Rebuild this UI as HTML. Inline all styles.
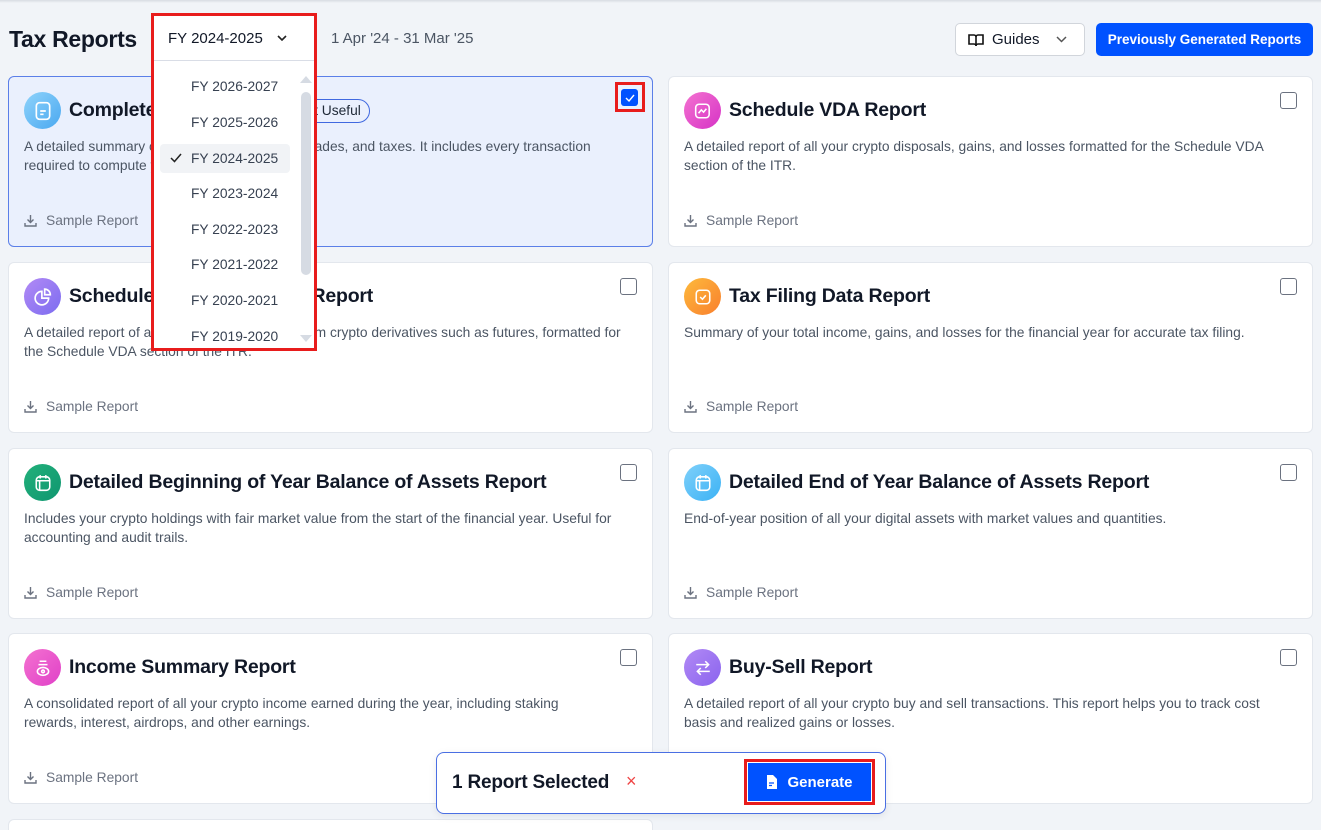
<!DOCTYPE html>
<html><head><meta charset="utf-8"><style>
*{box-sizing:border-box;margin:0;padding:0}
html,body{width:1321px;height:830px;overflow:hidden}
body{background:#f1f4f8;font-family:"Liberation Sans",sans-serif;color:#111827;position:relative}
.topshadow{position:absolute;left:0;top:0;width:1321px;height:3px;background:linear-gradient(#d8dce2,#f1f4f8)}
h1{position:absolute;left:9px;top:26px;font-size:23px;font-weight:600;color:#111827;letter-spacing:-0.3px}
.range{position:absolute;left:331px;top:30px;font-size:15px;color:#4b5563}
.guides{position:absolute;left:955px;top:23px;width:130px;height:33px;background:#fff;border:1px solid #d1d5db;border-radius:5px;font-size:15px;display:flex;align-items:center;padding-left:12px;gap:8px}
.prev{position:absolute;left:1096px;top:23px;width:217px;height:33px;background:#0052ff;border-radius:5px;color:#fff;font-size:13.5px;font-weight:600;display:flex;align-items:center;justify-content:center}
.card{position:absolute;width:645px;height:171px;background:#fff;border:1px solid #e3e7ed;border-radius:6px;overflow:hidden}
.card.sel{background:#eaf0fd;border-color:#5b7fe8;overflow:visible}
.ic{position:absolute;left:15px;top:15px;width:37px;height:37px;border-radius:50%;display:flex;align-items:center;justify-content:center}
.tt{position:absolute;left:60px;top:22px;font-size:19.5px;font-weight:600;letter-spacing:-0.2px}
.ds{position:absolute;left:15px;top:60px;width:600px;font-size:13.8px;line-height:19px;color:#4b5563}
.sr{position:absolute;left:15px;top:136px;font-size:13.8px;color:#6b7280;display:flex;align-items:center;gap:9px}
.cb{position:absolute;right:15px;top:15px;width:17px;height:17px;border:1.5px solid #6b7280;border-radius:3px;background:#fff}
.dd{position:absolute;left:151px;top:13px;width:166px;height:338px;border:3px solid #e81c1c;background:#fff}
.ddh{height:45px;border-bottom:1px solid #d9dde6;display:flex;align-items:center;padding-left:14px;font-size:15px;color:#111827;gap:14px}
.it{position:absolute;left:37px;font-size:13.8px;color:#374151}
</style></head><body>
<div class="topshadow"></div>
<h1>Tax Reports</h1>
<div class="range">1 Apr '24 - 31 Mar '25</div>
<div class="guides"><svg width="16" height="14" viewBox="0 0 16 14" fill="none" stroke="#111" stroke-width="1.6"><path d="M1 2h5a2 2 0 0 1 2 2v9a2 2 0 0 0-2-2H1zM15 2h-5a2 2 0 0 0-2 2v9a2 2 0 0 1 2-2h5z"/></svg>Guides<svg style="margin-left:8px" width="11" height="7" viewBox="0 0 11 7" fill="none" stroke="#555" stroke-width="1.5"><path d="M1 1l4.5 4.5L10 1"/></svg></div>
<div class="prev">Previously Generated Reports</div>

<div class="card sel" style="left:8px;top:76px">
<div class="ic" style="background:linear-gradient(135deg,#8fd3fb,#4aa8f0)"><svg width="18" height="20" viewBox="0 0 16 18" fill="none" stroke="#fff" stroke-width="1.5"><rect x="2" y="1.5" width="12" height="15" rx="3"/><path d="M5.5 9h5M5.5 12h3"/></svg></div>
<div class="tt">Complete Tax Report</div>
<div style="position:absolute;left:270px;top:22px;height:24px;padding:0 8px;border:1px solid #4069e0;border-radius:12px;font-size:13.8px;line-height:22px;color:#1f2937">Most Useful</div>
<div class="ds">A detailed summary of all your crypto income, trades, and taxes. It includes every transaction required to compute your taxes.</div>
<div class="sr"><svg width="13" height="13" viewBox="0 0 13 13" fill="none" stroke="#6b7280" stroke-width="1.4"><path d="M6.5 1v7M3.5 5.5l3 3 3-3M1 9v3h11V9"/></svg>Sample Report</div>
<div style="position:absolute;right:7px;top:5px;width:30px;height:30px;border:3px solid #e81c1c"></div>
<div style="position:absolute;right:14px;top:12px;width:17px;height:17px;background:#0052ff;border-radius:3px;display:flex;align-items:center;justify-content:center"><svg width="10" height="8" viewBox="0 0 10 8" fill="none" stroke="#fff" stroke-width="1.4"><path d="M1 4l3 3 5-6"/></svg></div>
</div>

<div class="card" style="left:668px;top:76px">
<div class="ic" style="background:linear-gradient(135deg,#f472d0,#d633c6)"><svg width="18" height="18" viewBox="0 0 16 16" fill="none" stroke="#fff" stroke-width="1.4"><rect x="1.5" y="2" width="12" height="12" rx="3"/><path d="M4 10l2.5-3 2 2L11 6"/></svg></div>
<div class="tt">Schedule VDA Report</div>
<div class="ds">A detailed report of all your crypto disposals, gains, and losses formatted for the Schedule VDA section of the ITR.</div>
<div class="sr"><svg width="13" height="13" viewBox="0 0 13 13" fill="none" stroke="#6b7280" stroke-width="1.4"><path d="M6.5 1v7M3.5 5.5l3 3 3-3M1 9v3h11V9"/></svg>Sample Report</div>
<div class="cb"></div></div>

<div class="card" style="left:8px;top:262px">
<div class="ic" style="background:linear-gradient(135deg,#b28af5,#7c6cf0)"><svg width="18" height="18" viewBox="0 0 16 16" fill="none" stroke="#fff" stroke-width="1.5"><path d="M7 3a6 6 0 1 0 6 6H7z"/><path d="M9.5 1a5 5 0 0 1 5 5h-5z"/></svg></div>
<div class="tt">Schedule VDA Derivatives Report</div>
<div class="ds">A detailed report of all your gains and losses from crypto derivatives such as futures, formatted for the Schedule VDA section of the ITR.</div>
<div class="sr"><svg width="13" height="13" viewBox="0 0 13 13" fill="none" stroke="#6b7280" stroke-width="1.4"><path d="M6.5 1v7M3.5 5.5l3 3 3-3M1 9v3h11V9"/></svg>Sample Report</div>
<div class="cb"></div></div>

<div class="card" style="left:668px;top:262px">
<div class="ic" style="background:linear-gradient(135deg,#fdba3c,#f97f2e)"><svg width="18" height="18" viewBox="0 0 16 16" fill="none" stroke="#fff" stroke-width="1.4"><rect x="2" y="2" width="12" height="12" rx="3"/><path d="M5.5 8l2 2 3-3.5"/></svg></div>
<div class="tt">Tax Filing Data Report</div>
<div class="ds">Summary of your total income, gains, and losses for the financial year for accurate tax filing.</div>
<div class="sr"><svg width="13" height="13" viewBox="0 0 13 13" fill="none" stroke="#6b7280" stroke-width="1.4"><path d="M6.5 1v7M3.5 5.5l3 3 3-3M1 9v3h11V9"/></svg>Sample Report</div>
<div class="cb"></div></div>

<div class="card" style="left:8px;top:448px">
<div class="ic" style="background:linear-gradient(135deg,#22b07a,#0f9670)"><svg width="18" height="18" viewBox="0 0 16 16" fill="none" stroke="#fff" stroke-width="1.4"><rect x="2" y="2.5" width="12" height="12" rx="3"/><path d="M2 6h12M5.5 1v3M10.5 1v3M5 6v8"/></svg></div>
<div class="tt">Detailed Beginning of Year Balance of Assets Report</div>
<div class="ds">Includes your crypto holdings with fair market value from the start of the financial year. Useful for accounting and audit trails.</div>
<div class="sr"><svg width="13" height="13" viewBox="0 0 13 13" fill="none" stroke="#6b7280" stroke-width="1.4"><path d="M6.5 1v7M3.5 5.5l3 3 3-3M1 9v3h11V9"/></svg>Sample Report</div>
<div class="cb"></div></div>

<div class="card" style="left:668px;top:448px">
<div class="ic" style="background:linear-gradient(135deg,#7fd0fa,#3bb2f5)"><svg width="18" height="18" viewBox="0 0 16 16" fill="none" stroke="#fff" stroke-width="1.4"><rect x="2" y="2.5" width="12" height="12" rx="3"/><path d="M2 6h12M5.5 1v3M10.5 1v3M5 6v8"/></svg></div>
<div class="tt">Detailed End of Year Balance of Assets Report</div>
<div class="ds">End-of-year position of all your digital assets with market values and quantities.</div>
<div class="sr"><svg width="13" height="13" viewBox="0 0 13 13" fill="none" stroke="#6b7280" stroke-width="1.4"><path d="M6.5 1v7M3.5 5.5l3 3 3-3M1 9v3h11V9"/></svg>Sample Report</div>
<div class="cb"></div></div>

<div class="card" style="left:8px;top:633px">
<div class="ic" style="background:linear-gradient(135deg,#f472d0,#e040c8)"><svg width="18" height="18" viewBox="0 0 16 16" fill="none" stroke="#fff" stroke-width="1.4"><path d="M5 2h6M4 5h8"/><ellipse cx="8" cy="11" rx="5" ry="3.5"/><circle cx="8" cy="11" r="1.2"/></svg></div>
<div class="tt">Income Summary Report</div>
<div class="ds" style="width:580px">A consolidated report of all your crypto income earned during the year, including staking rewards, interest, airdrops, and other earnings.</div>
<div class="sr"><svg width="13" height="13" viewBox="0 0 13 13" fill="none" stroke="#6b7280" stroke-width="1.4"><path d="M6.5 1v7M3.5 5.5l3 3 3-3M1 9v3h11V9"/></svg>Sample Report</div>
<div class="cb"></div></div>

<div class="card" style="left:668px;top:633px">
<div class="ic" style="background:linear-gradient(135deg,#b28af5,#8a63ee)"><svg width="18" height="18" viewBox="0 0 16 16" fill="none" stroke="#fff" stroke-width="1.4"><path d="M2 5h11M10 2l3 3-3 3M14 11H3M6 8l-3 3 3 3"/></svg></div>
<div class="tt">Buy-Sell Report</div>
<div class="ds">A detailed report of all your crypto buy and sell transactions. This report helps you to track cost basis and realized gains or losses.</div>
<div class="sr"><svg width="13" height="13" viewBox="0 0 13 13" fill="none" stroke="#6b7280" stroke-width="1.4"><path d="M6.5 1v7M3.5 5.5l3 3 3-3M1 9v3h11V9"/></svg>Sample Report</div>
<div class="cb"></div></div>

<div class="card" style="left:8px;top:819px;height:11px;border-bottom:none;border-radius:6px 6px 0 0"></div>

<div class="dd">
<div class="ddh">FY 2024-2025<svg width="10" height="6" viewBox="0 0 10 6" fill="none" stroke="#222" stroke-width="1.6"><path d="M1 1l4 4 4-4"/></svg></div>
<div style="position:absolute;left:6px;top:128px;width:130px;height:29px;background:#f1f3f6;border-radius:4px"></div>
<div class="it" style="top:63px">FY 2026-2027</div>
<div class="it" style="top:99px">FY 2025-2026</div>
<svg style="position:absolute;left:16px;top:137px" width="12" height="10" viewBox="0 0 12 10" fill="none" stroke="#222" stroke-width="1.5"><path d="M1 5l3.5 3.5L11 1"/></svg>
<div class="it" style="top:135px">FY 2024-2025</div>
<div class="it" style="top:170px">FY 2023-2024</div>
<div class="it" style="top:206px">FY 2022-2023</div>
<div class="it" style="top:241px">FY 2021-2022</div>
<div class="it" style="top:277px">FY 2020-2021</div>
<div class="it" style="top:313px">FY 2019-2020</div>
<div style="position:absolute;left:146px;top:60px;width:0;height:0;border-left:6px solid transparent;border-right:6px solid transparent;border-bottom:7px solid #d6dbe3"></div>
<div style="position:absolute;left:147px;top:76px;width:10px;height:183px;background:#d6dbe3;border-radius:5px"></div>
<div style="position:absolute;left:146px;top:319px;width:0;height:0;border-left:6px solid transparent;border-right:6px solid transparent;border-top:7px solid #d6dbe3"></div>
</div>

<div style="position:absolute;left:436px;top:752px;width:450px;height:62px;background:#fff;border:1px solid #4a6fe3;border-radius:8px;box-shadow:0 2px 8px rgba(0,0,0,.08)">
<div style="position:absolute;left:15px;top:19px;font-size:19px;font-weight:600;letter-spacing:-0.2px">1 Report Selected</div>
<div style="position:absolute;left:189px;top:18px;font-size:18px;color:#ef4444">×</div>
<div style="position:absolute;left:307px;top:6px;width:131px;height:46px;border:3px solid #e81c1c"></div>
<div style="position:absolute;left:311px;top:10px;width:123px;height:38px;background:#0052ff;color:#fff;font-size:15px;font-weight:600;display:flex;align-items:center;justify-content:center;gap:9px"><svg width="12" height="14" viewBox="0 0 12 14"><path d="M1 0h6l4 4v10H1z" fill="#fff"/><path d="M3 8h5M3 10.5h3" stroke="#0052ff" stroke-width="1.2"/></svg>Generate</div>
</div>
</body></html>
